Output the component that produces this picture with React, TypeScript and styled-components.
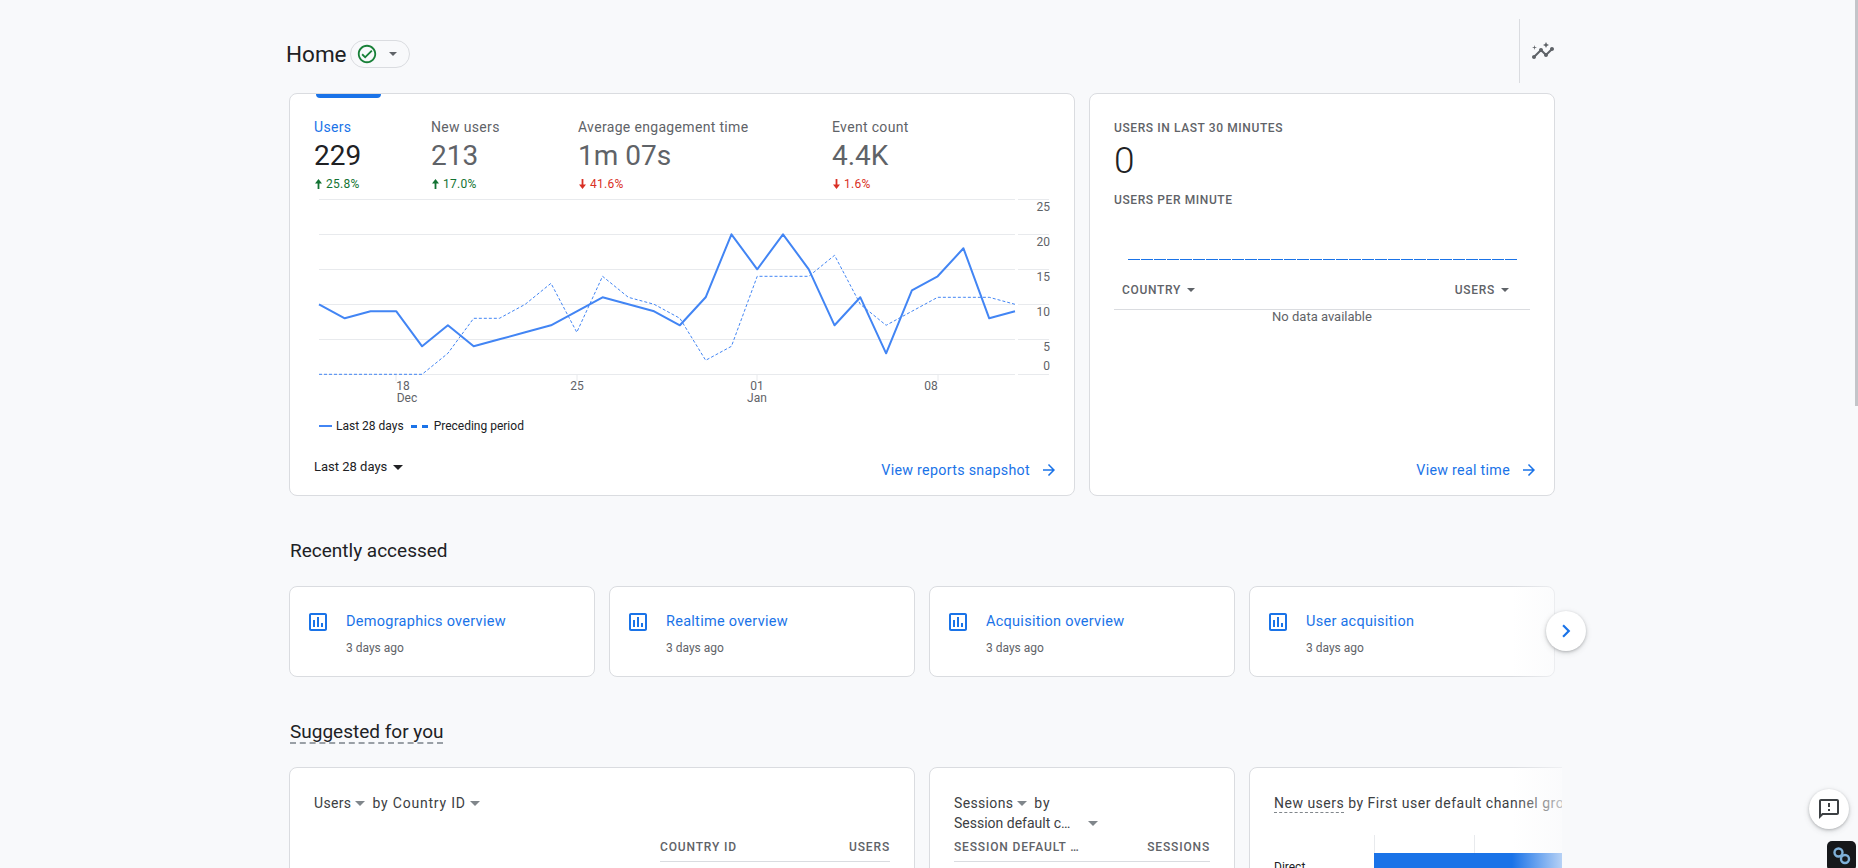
import React from 'react';
import styled, { createGlobalStyle } from 'styled-components';
import {
  MdArrowForward,
  MdChevronRight,
  MdInsights,
  MdOutlineAssessment,
  MdOutlineCheckCircle,
  MdOutlineFeedback,
} from 'react-icons/md';

const BLUE = '#1a73e8';
const LINE_BLUE = '#4285f4';
const BORDER = '#dadce0';
const GRID = '#e8eaed';
const TEXT = '#202124';
const MUTED = '#5f6368';

const GlobalStyle = createGlobalStyle`
  html, body {
    margin: 0;
    height: 100%;
    overflow: hidden;
    background: #f8f9fb;
    font-family: Roboto, "Liberation Sans", sans-serif;
    color: ${TEXT};
  }
`;

const Page = styled.div`
  position: relative;
  width: 1858px;
  height: 868px;
  overflow: hidden;
  box-sizing: border-box;
  padding-left: 289px;
`;

const Header = styled.header`
  width: 1266px;
  height: 93px;
  box-sizing: border-box;
  padding-top: 19px;
  display: flex;
  justify-content: space-between;
  align-items: flex-start;
`;

const TitleGroup = styled.div`
  margin: 21px 0 0 -3px;
  display: flex;
  align-items: center;
  gap: 3px;
`;

const PageTitle = styled.h1`
  margin: 0;
  font-size: 22.5px;
  line-height: 28px;
  font-weight: 400;
`;

const StatusChip = styled.div`
  width: 60px;
  height: 28px;
  box-sizing: border-box;
  border: 1px solid ${BORDER};
  border-radius: 14px;
  padding-left: 5px;
  display: flex;
  align-items: center;
  gap: 11px;
  color: #188038;
`;

const InsightsGroup = styled.div`
  display: flex;
  align-items: center;
  gap: 11px;
  color: ${MUTED};
`;

const VerticalRule = styled.div`
  width: 1px;
  height: 64px;
  background: ${BORDER};
`;

const Caret = styled.span<{ $color?: string; $size?: number }>`
  display: inline-block;
  width: 0;
  height: 0;
  border-left: ${(p) => p.$size ?? 5}px solid transparent;
  border-right: ${(p) => p.$size ?? 5}px solid transparent;
  border-top: ${(p) => p.$size ?? 5}px solid ${(p) => p.$color ?? '#80868b'};
`;

const TopRow = styled.div`
  display: flex;
  gap: 14px;
  width: 1266px;
`;

const Card = styled.section<{ $width: number; $height?: number }>`
  width: ${(p) => p.$width}px;
  height: ${(p) => p.$height ?? 403}px;
  flex: none;
  box-sizing: border-box;
  background: #fff;
  border: 1px solid ${BORDER};
  border-radius: 8px;
  display: flex;
  flex-direction: column;
  overflow: hidden;
`;

const TabMarker = styled.div`
  margin-left: 26px;
  width: 65px;
  height: 4px;
  flex: none;
  background: ${BLUE};
  border-radius: 0 0 4px 4px;
`;

const Tabs = styled.div`
  margin: 19px 0 0 24px;
  display: grid;
  grid-template-columns: 117px 147px 254px 1fr;
`;

const TabLabel = styled.div<{ $active?: boolean }>`
  font-size: 14px;
  line-height: 20px;
  letter-spacing: 0.33px;
  color: ${(p) => (p.$active ? BLUE : MUTED)};
`;

const TabValue = styled.div<{ $active?: boolean }>`
  font-size: 28px;
  line-height: 38px;
  color: ${(p) => (p.$active ? TEXT : MUTED)};
`;

const Delta = styled.div<{ $up?: boolean }>`
  margin-top: 1px;
  font-size: 12px;
  line-height: 16px;
  letter-spacing: 0.3px;
  display: flex;
  align-items: center;
  gap: 3px;
  color: ${(p) => (p.$up ? '#137333' : '#d93025')};
`;

const ChartSvg = styled.svg`
  display: block;
  flex: none;
  margin: 3px 0 0 24px;
  width: 745px;
  height: 210px;
`;

const Legend = styled.div`
  margin: 13px 0 0 29px;
  display: flex;
  align-items: center;
  font-size: 12px;
  line-height: 16px;
  color: ${TEXT};
`;

const LegendSolid = styled.span`
  width: 13px;
  height: 2px;
  margin-right: 4px;
  background: ${LINE_BLUE};
`;

const LegendDashed = styled.span`
  width: 17px;
  height: 3px;
  margin: 0 6px 0 7px;
  background: repeating-linear-gradient(to right, ${BLUE} 0 6px, transparent 6px 11px);
`;

const CardFooter = styled.div`
  margin-top: auto;
  padding: 0 16px 15px 24px;
  display: flex;
  justify-content: space-between;
  align-items: flex-end;
`;

const RangeSelect = styled.div`
  margin-bottom: 5px;
  font-size: 13px;
  line-height: 16px;
  display: flex;
  align-items: center;
  gap: 6px;
`;

const ViewLink = styled.a`
  margin-left: auto;
  font-size: 14.25px;
  line-height: 20px;
  font-weight: 400;
  letter-spacing: 0.3px;
  color: ${BLUE};
  display: flex;
  align-items: center;
  gap: 10px;
`;

const RealtimeBody = styled.div`
  padding: 26px 24px 0;
`;

const OverLabel = styled.div`
  font-size: 12px;
  line-height: 16px;
  font-weight: 500;
  letter-spacing: 0.6px;
  color: ${MUTED};
`;

const RealtimeCount = styled.div`
  margin: 3px 0 9px;
  font-size: 37px;
  line-height: 44px;
  font-weight: 300;
`;

const MinuteBars = styled.div`
  margin: 51px 0 0 14px;
  width: 389px;
  display: flex;
  gap: 1px;
`;

const MinuteBar = styled.span`
  flex: 1;
  height: 1px;
  background: ${BLUE};
`;

const RealtimeHead = styled.div`
  height: 50px;
  box-sizing: border-box;
  padding: 0 21px 11px 8px;
  border-bottom: 1px solid ${BORDER};
  display: flex;
  justify-content: space-between;
  align-items: flex-end;
`;

const SortHead = styled.div`
  font-size: 12px;
  line-height: 16px;
  font-weight: 500;
  letter-spacing: 0.7px;
  color: ${MUTED};
  display: flex;
  align-items: center;
  gap: 6px;
`;

const EmptyNote = styled.div`
  font-size: 13px;
  line-height: 14px;
  text-align: center;
  color: ${MUTED};
`;

const SectionTitle = styled.h2`
  margin: 41px 0 21px 1px;
  font-size: 19px;
  line-height: 28px;
  font-weight: 400;
`;

const DashedTitle = styled(SectionTitle)`
  width: fit-content;
  margin: 45px 0 0 1px;
  line-height: 20px;
  border-bottom: 2px dashed #9aa0a6;
`;

const ScrollerWrap = styled.div`
  position: relative;
  width: 1273px;
`;

const Scroller = styled.div`
  position: relative;
  display: flex;
  gap: 14px;
  overflow: hidden;

  &::after {
    content: '';
    position: absolute;
    top: 0;
    bottom: 0;
    right: 0;
    width: 50px;
    background: linear-gradient(to right, rgba(248, 249, 251, 0), rgba(248, 249, 251, 0.7));
  }
`;

const RecentCard = styled.a`
  width: 306px;
  height: 91px;
  flex: none;
  box-sizing: border-box;
  background: #fff;
  border: 1px solid ${BORDER};
  border-radius: 8px;
  padding: 17px 0 0 16px;
  display: flex;
  gap: 16px;
  color: ${BLUE};

  & > svg {
    margin-top: 6px;
  }
`;

const RecentName = styled.div`
  margin-top: 8px;
  font-size: 14.5px;
  line-height: 20px;
  letter-spacing: 0.27px;
`;

const RecentTime = styled.div`
  margin-top: 8px;
  font-size: 12px;
  line-height: 16px;
  color: ${MUTED};
`;

const RoundButton = styled.button`
  position: absolute;
  left: 1257px;
  top: 25px;
  width: 40px;
  height: 40px;
  padding: 0;
  border: 0;
  border-radius: 50%;
  background: #fff;
  color: ${BLUE};
  box-shadow: 0 1px 3px rgba(60, 64, 67, 0.3), 0 2px 6px rgba(60, 64, 67, 0.15);
  display: flex;
  align-items: center;
  justify-content: center;
`;

const SuggestedRow = styled(Scroller)`
  margin-top: 23px;
`;

const SuggestedBody = styled.div`
  padding: 25px 24px 0;
`;

const CardTitle = styled.div<{ $tracking?: number }>`
  height: 42px;
  font-size: 14px;
  line-height: 20px;
  letter-spacing: ${(p) => p.$tracking ?? 0.35}px;
  color: #3c4043;
  white-space: nowrap;
`;

const TitleLine = styled.div<{ $tight?: boolean }>`
  display: flex;
  align-items: center;
  gap: 4px;
  letter-spacing: ${(p) => (p.$tight ? '0' : 'inherit')};
`;

const TitleBy = styled.span`
  margin-left: 3px;
  letter-spacing: 0.8px;
`;

const TitleCaretGap = styled.span`
  margin-left: 14px;
  display: inline-flex;
`;

const DottedWord = styled.span`
  border-bottom: 1px dashed #80868b;
  line-height: 18px;
  display: inline-block;
`;

const TableHead = styled.div<{ $width?: number }>`
  height: 27px;
  width: ${(p) => (p.$width ? `${p.$width}px` : 'auto')};
  margin-left: auto;
  box-sizing: border-box;
  border-bottom: 1px solid ${BORDER};
  display: flex;
  justify-content: space-between;
  font-size: 12px;
  line-height: 24px;
  font-weight: 500;
  letter-spacing: 0.85px;
  color: ${MUTED};
`;

const BarGrid = styled.div`
  margin: 0 0 0 100px;
  display: flex;
`;

const BarGridCell = styled.span`
  width: 99px;
  height: 18px;
  border-left: 1px solid ${GRID};
`;

const BarRow = styled.div`
  display: flex;
  width: 500px;
`;

const BarLabel = styled.div`
  width: 100px;
  padding-top: 6px;
  font-size: 12px;
  line-height: 16px;
`;

const BarFill = styled.div`
  width: 400px;
  height: 50px;
  background: ${BLUE};
`;

const FeedbackButton = styled(RoundButton)`
  position: absolute;
  left: 1809px;
  top: 789px;
  color: #3c4043;
`;

const ExtensionBadge = styled.div`
  position: absolute;
  left: 1827px;
  top: 841px;
  width: 29px;
  height: 30px;
  border-radius: 5px;
  background: #16181b;
  display: flex;
  align-items: flex-start;
  justify-content: center;
  padding-top: 5px;
  box-sizing: border-box;
`;

const ScrollThumb = styled.div`
  position: absolute;
  right: 0;
  top: 0;
  width: 3px;
  height: 406px;
  background: #c4c5c9;
`;

const current = [10, 8, 9, 9, 4, 7, 4, 5, 6, 7, 9, 11, 10, 9, 7, 11, 20, 15, 20, 15, 7, 11, 3, 12, 14, 18, 8, 9];
const previous = [0, 0, 0, 0, 0, 3, 8, 8, 10, 13, 6, 14, 11, 10, 8, 2, 4, 14, 14, 14, 17, 10, 7, 9, 11, 11, 11, 10];

const toPoints = (values: number[]) =>
  values.map((v, i) => `${319 + (i * 696) / 27},${374.3 - v * 7}`).join(' ');

const gridLines = [199, 234, 269, 304, 339, 374];
const yLabels: [string, number][] = [
  ['25', 211],
  ['20', 246],
  ['15', 281],
  ['10', 316],
  ['5', 351],
  ['0', 370],
];
const xLabels: [string, number, number][] = [
  ['18', 403, 390],
  ['Dec', 407, 402],
  ['25', 577, 390],
  ['01', 757, 390],
  ['Jan', 757, 402],
  ['08', 931, 390],
];

const tabs = [
  { label: 'Users', value: '229', delta: '25.8%', up: true, active: true },
  { label: 'New users', value: '213', delta: '17.0%', up: true },
  { label: 'Average engagement time', value: '1m 07s', delta: '41.6%', up: false },
  { label: 'Event count', value: '4.4K', delta: '1.6%', up: false },
];

const recent = ['Demographics overview', 'Realtime overview', 'Acquisition overview', 'User acquisition'];

const DeltaArrow = ({ up }: { up?: boolean }) => (
  <svg width="9" height="12" viewBox="0 0 9 12" fill="currentColor">
    {up ? <path d="M4.5 1 8 5.5H5.4V11H3.6V5.5H1z" /> : <path d="M4.5 11 8 6.5H5.4V1H3.6v5.5H1z" />}
  </svg>
);

const Chart = () => (
  <ChartSvg viewBox="314 195 745 210">
    {gridLines.map((y) => (
      <g key={y} stroke={GRID} strokeWidth="1">
        <line x1="319" x2="1015" y1={y + 0.5} y2={y + 0.5} />
        <line x1="1018" x2="1049" y1={y + 0.5} y2={y + 0.5} />
      </g>
    ))}
    {[396, 577, 757, 938].map((x) => (
      <line key={x} x1={x} x2={x} y1="375" y2="381" stroke={GRID} />
    ))}
    <polyline points={toPoints(previous)} fill="none" stroke={LINE_BLUE} strokeWidth="1" strokeDasharray="3 2" />
    <polyline points={toPoints(current)} fill="none" stroke={LINE_BLUE} strokeWidth="2" strokeLinejoin="round" />
    <g fontFamily="Roboto" fontSize="12" fill={MUTED}>
      {yLabels.map(([t, y]) => (
        <text key={t} x="1050" y={y} textAnchor="end">
          {t}
        </text>
      ))}
      {xLabels.map(([t, x, y]) => (
        <text key={t} x={x} y={y} textAnchor="middle">
          {t}
        </text>
      ))}
    </g>
  </ChartSvg>
);

const App: React.FC = () => (
  <Page>
    <GlobalStyle />
    <Header>
      <TitleGroup>
        <PageTitle>Home</PageTitle>
        <StatusChip>
          <MdOutlineCheckCircle size={22} />
          <Caret $color={MUTED} $size={4} />
        </StatusChip>
      </TitleGroup>
      <InsightsGroup>
        <VerticalRule />
        <MdInsights size={24} />
      </InsightsGroup>
    </Header>

    <TopRow>
      <Card $width={786}>
        <TabMarker />
        <Tabs>
          {tabs.map((t) => (
            <div key={t.label}>
              <TabLabel $active={t.active}>{t.label}</TabLabel>
              <TabValue $active={t.active}>{t.value}</TabValue>
              <Delta $up={t.up}>
                <DeltaArrow up={t.up} />
                {t.delta}
              </Delta>
            </div>
          ))}
        </Tabs>
        <Chart />
        <Legend>
          <LegendSolid />
          Last 28 days
          <LegendDashed />
          Preceding period
        </Legend>
        <CardFooter>
          <RangeSelect>
            Last 28 days
            <Caret $color={TEXT} $size={5} />
          </RangeSelect>
          <ViewLink>
            View reports snapshot
            <MdArrowForward size={18} />
          </ViewLink>
        </CardFooter>
      </Card>

      <Card $width={466}>
        <RealtimeBody>
          <OverLabel>USERS IN LAST 30 MINUTES</OverLabel>
          <RealtimeCount>0</RealtimeCount>
          <OverLabel>USERS PER MINUTE</OverLabel>
          <MinuteBars>
            {Array.from({ length: 30 }, (_, i) => (
              <MinuteBar key={i} />
            ))}
          </MinuteBars>
          <RealtimeHead>
            <SortHead>
              COUNTRY
              <Caret $color={MUTED} $size={4} />
            </SortHead>
            <SortHead>
              USERS
              <Caret $color={MUTED} $size={4} />
            </SortHead>
          </RealtimeHead>
          <EmptyNote>No data available</EmptyNote>
        </RealtimeBody>
        <CardFooter>
          <ViewLink>
            View real time
            <MdArrowForward size={18} />
          </ViewLink>
        </CardFooter>
      </Card>
    </TopRow>

    <SectionTitle>Recently accessed</SectionTitle>
    <ScrollerWrap>
      <Scroller>
        {recent.map((name) => (
          <RecentCard key={name}>
            <MdOutlineAssessment size={24} />
            <div>
              <RecentName>{name}</RecentName>
              <RecentTime>3 days ago</RecentTime>
            </div>
          </RecentCard>
        ))}
      </Scroller>
      <RoundButton>
        <MdChevronRight size={26} />
      </RoundButton>
    </ScrollerWrap>

    <DashedTitle>Suggested for you</DashedTitle>
    <ScrollerWrap>
      <SuggestedRow>
        <Card $width={626} $height={320}>
          <SuggestedBody>
            <CardTitle>
              <TitleLine>
                Users
                <Caret />
                <TitleBy>by Country ID</TitleBy>
                <Caret />
              </TitleLine>
            </CardTitle>
            <TableHead $width={230}>
              <span>COUNTRY ID</span>
              <span>USERS</span>
            </TableHead>
          </SuggestedBody>
        </Card>
        <Card $width={306} $height={320}>
          <SuggestedBody>
            <CardTitle>
              <TitleLine>
                Sessions
                <Caret />
                <TitleBy>by</TitleBy>
              </TitleLine>
              <TitleLine $tight>
                Session default c…
                <TitleCaretGap>
                  <Caret />
                </TitleCaretGap>
              </TitleLine>
            </CardTitle>
            <TableHead>
              <span>SESSION DEFAULT …</span>
              <span>SESSIONS</span>
            </TableHead>
          </SuggestedBody>
        </Card>
        <Card $width={420} $height={320}>
          <SuggestedBody>
            <CardTitle $tracking={0.5}>
              <DottedWord>New users</DottedWord> by First user default channel group
            </CardTitle>
            <BarGrid>
              <BarGridCell />
              <BarGridCell />
            </BarGrid>
            <BarRow>
              <BarLabel>Direct</BarLabel>
              <BarFill />
            </BarRow>
          </SuggestedBody>
        </Card>
      </SuggestedRow>
    </ScrollerWrap>

    <FeedbackButton>
      <MdOutlineFeedback size={24} />
    </FeedbackButton>
    <ExtensionBadge>
      <svg width="20" height="20" viewBox="0 0 20 20" fill="none" stroke="#7fb0d8" strokeWidth="2.4">
        <circle cx="6.5" cy="6.5" r="4" />
        <circle cx="13" cy="13" r="4" />
      </svg>
    </ExtensionBadge>
    <ScrollThumb />
  </Page>
);

export default App;
